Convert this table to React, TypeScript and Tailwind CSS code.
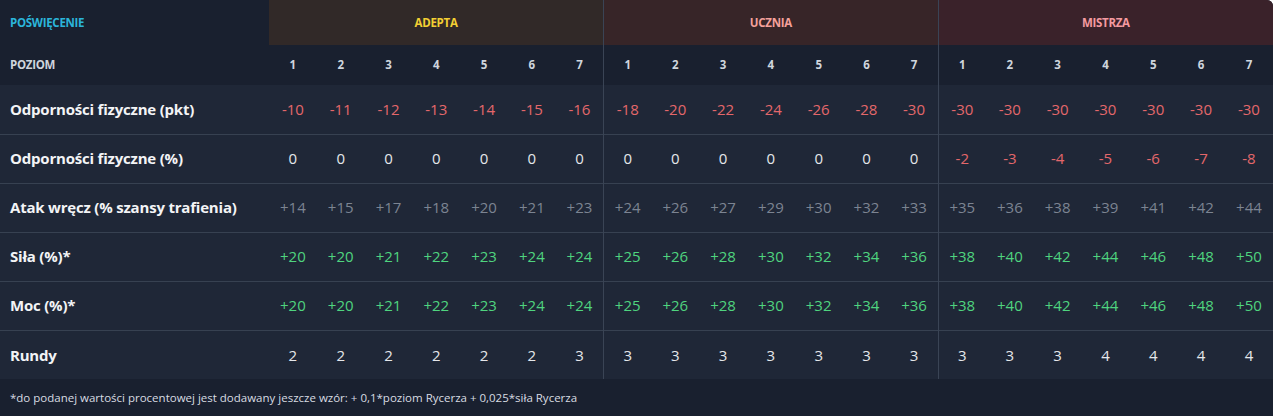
import React from "react";

type Tone = "red" | "white" | "gray" | "green";

interface Row {
  label: string;
  tone: Tone;
  values: (string | number)[];
}

const Groups = [
  { label: "ADEPTA", bg: "bg-[#312928]", text: "text-[#f3cf33]" },
  { label: "UCZNIA", bg: "bg-[#372528]", text: "text-[#f4a19b]" },
  { label: "MISTRZA", bg: "bg-[#3a222a]", text: "text-[#f49aa0]" },
];

const Rows: Row[] = [
  {
    label: "Odporności fizyczne (pkt)",
    tone: "red",
    values: [-10, -11, -12, -13, -14, -15, -16, -18, -20, -22, -24, -26, -28, -30, -30, -30, -30, -30, -30, -30, -30],
  },
  {
    label: "Odporności fizyczne (%)",
    tone: "white",
    values: [0, 0, 0, 0, 0, 0, 0, 0, 0, 0, 0, 0, 0, 0, -2, -3, -4, -5, -6, -7, -8],
  },
  {
    label: "Atak wręcz (% szansy trafienia)",
    tone: "gray",
    values: ["+14", "+15", "+17", "+18", "+20", "+21", "+23", "+24", "+26", "+27", "+29", "+30", "+32", "+33", "+35", "+36", "+38", "+39", "+41", "+42", "+44"],
  },
  {
    label: "Siła (%)*",
    tone: "green",
    values: ["+20", "+20", "+21", "+22", "+23", "+24", "+24", "+25", "+26", "+28", "+30", "+32", "+34", "+36", "+38", "+40", "+42", "+44", "+46", "+48", "+50"],
  },
  {
    label: "Moc (%)*",
    tone: "green",
    values: ["+20", "+20", "+21", "+22", "+23", "+24", "+24", "+25", "+26", "+28", "+30", "+32", "+34", "+36", "+38", "+40", "+42", "+44", "+46", "+48", "+50"],
  },
  {
    label: "Rundy",
    tone: "white",
    values: [2, 2, 2, 2, 2, 2, 3, 3, 3, 3, 3, 3, 3, 3, 3, 3, 3, 4, 4, 4, 4],
  },
];

const toneClass: Record<Tone, string> = {
  red: "text-[#e4676b]",
  white: "text-[#e5e7eb]",
  gray: "text-[#7c8492]",
  green: "text-[#4fd47f]",
};

// negative numbers are always red
const valueTone = (row: Row, v: string | number): Tone =>
  typeof v === "number" && v < 0 ? "red" : row.tone;

const levels = [1, 2, 3, 4, 5, 6, 7];

// first column of 2nd and 3rd group gets the divider
const divider = (i: number) => (i === 7 || i === 14 ? "border-l border-[#3a4455]" : "");

export default function App() {
  return (
    <div className="w-[1273px] h-[416px] bg-[#19202f] overflow-hidden rounded-tr-md font-['Open_Sans',sans-serif]">
      <table className="w-full table-fixed border-collapse">
        <colgroup>
          <col className="w-[269px]" />
          {Array.from({ length: 21 }).map((_, i) => (
            <col key={i} />
          ))}
        </colgroup>
        <thead>
          <tr className="h-[45px]">
            <th className="text-left pl-2.5 text-[11.5px] font-bold text-[#2bb5da] tracking-tight">
              POŚWIĘCENIE
            </th>
            {Groups.map((g, gi) => (
              <th
                key={g.label}
                colSpan={7}
                className={`${g.bg} ${g.text} text-[11.5px] font-bold tracking-tight ${gi > 0 ? "border-l border-[#3a4455]" : ""}`}
              >
                {g.label}
              </th>
            ))}
          </tr>
          <tr className="h-[40px]">
            <th className="text-left pl-2.5 text-[11.5px] font-bold text-[#cfd5dd] tracking-tight">POZIOM</th>
            {Groups.map((g, gi) =>
              levels.map((l, li) => (
                <th
                  key={`${g.label}-${l}`}
                  className={`text-[11.5px] font-bold text-[#cfd5dd] ${divider(gi * 7 + li)}`}
                >
                  {l}
                </th>
              ))
            )}
          </tr>
        </thead>
        <tbody className="bg-[#1f2737]">
          {Rows.map((r, ri) => (
            <tr key={r.label} className={`h-[49px] ${ri > 0 ? "border-t border-[#374151]" : ""}`}>
              <td className="pl-2.5 text-[15px] font-bold text-[#f3f4f6] whitespace-nowrap tracking-[-0.2px]">
                {r.label}
              </td>
              {r.values.map((v, i) => (
                <td key={i} className={`text-center text-[15px] ${toneClass[valueTone(r, v)]} ${divider(i)}`}>
                  {v}
                </td>
              ))}
            </tr>
          ))}
        </tbody>
      </table>
      <div className="h-[38px] flex items-center px-2.5 text-[11.5px] font-medium text-[#d8dce2]">
        *do podanej wartości procentowej jest dodawany jeszcze wzór: + 0,1*poziom Rycerza + 0,025*siła Rycerza
      </div>
    </div>
  );
}
